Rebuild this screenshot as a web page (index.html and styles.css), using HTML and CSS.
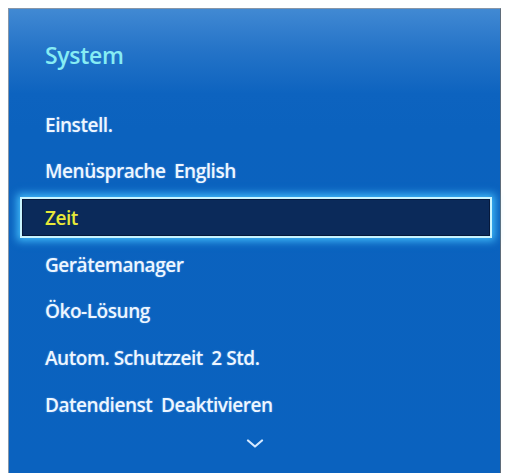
FILE: index.html
```html
<!DOCTYPE html>
<html lang="de">
<head>
<meta charset="utf-8">
<title>System</title>
<link rel="stylesheet" href="styles.css">
</head>
<body>
<div class="panel">
  <h1 class="title">System</h1>
  <ul class="menu">
    <li class="item">Einstell.</li>
    <li class="item">Menüsprache <span class="val">English</span></li>
    <li class="item selected">Zeit</li>
    <li class="item">Gerätemanager</li>
    <li class="item">Öko-Lösung</li>
    <li class="item">Autom. Schutzzeit <span class="val">2 Std.</span></li>
    <li class="item">Datendienst <span class="val">Deaktivieren</span></li>
  </ul>
  <div class="more">
    <svg width="18" height="9" viewBox="0 0 18 9"><path d="M2 1.5 L9 7.5 L16 1.5" fill="none" stroke="#d4e8ff" stroke-width="2.2" stroke-linecap="round" stroke-linejoin="round"/></svg>
  </div>
</div>
</body>
</html>
```

FILE: styles.css
```css
html, body {
  margin: 0;
  padding: 0;
  background: #ffffff;
}
body {
  font-family: "Open Sans", "DejaVu Sans", sans-serif;
  width: 507px;
  height: 473px;
  overflow: hidden;
}
.panel {
  box-sizing: border-box;
  margin: 8px 6px 0 8px;
  height: 465px;
  border: 1px solid #8796a8;
  border-bottom: none;
  border-right-color: #5f6c7a;
  background: linear-gradient(to bottom, #4189d3 0px, #2574c8 40px, #0d63bf 85px, #0b62be 120px, #0a62bf 100%);
  display: flex;
  flex-direction: column;
}
.title {
  margin: 0;
  padding: 31px 0 0 36px;
  height: 63px;
  box-sizing: border-box;
  font-size: 23px;
  line-height: 30px;
  font-weight: 600;
  color: #86ecf4;
  letter-spacing: -0.3px;
  margin-bottom: 29.3px;
}
.menu {
  list-style: none;
  margin: 0;
  padding: 0;
}
.item {
  box-sizing: border-box;
  height: 46.67px;
  display: flex;
  align-items: center;
  padding-left: 36px;
  font-size: 19px;
  font-weight: 600;
  color: #eef6ff;
  letter-spacing: -0.45px;
  white-space: pre;
  text-shadow: 0 0 2px rgba(160, 210, 255, 0.5);
}
.val {
  margin-left: 4px;
}
.item.selected {
  height: 41px;
  margin: 2.83px 8px 2.83px 11px;
  padding-left: 23px;
  background: #0b2a5a;
  border: 2px solid #c8f4ff;
  box-shadow: 0 0 8px 3px rgba(70, 195, 255, 0.9), inset 0 0 0 1px #06183a;
  color: #e8e838;
  text-shadow: none;
}
.more {
  height: 32px;
  display: flex;
  align-items: center;
  justify-content: center;
}
.more svg {
  display: block;
}
```
